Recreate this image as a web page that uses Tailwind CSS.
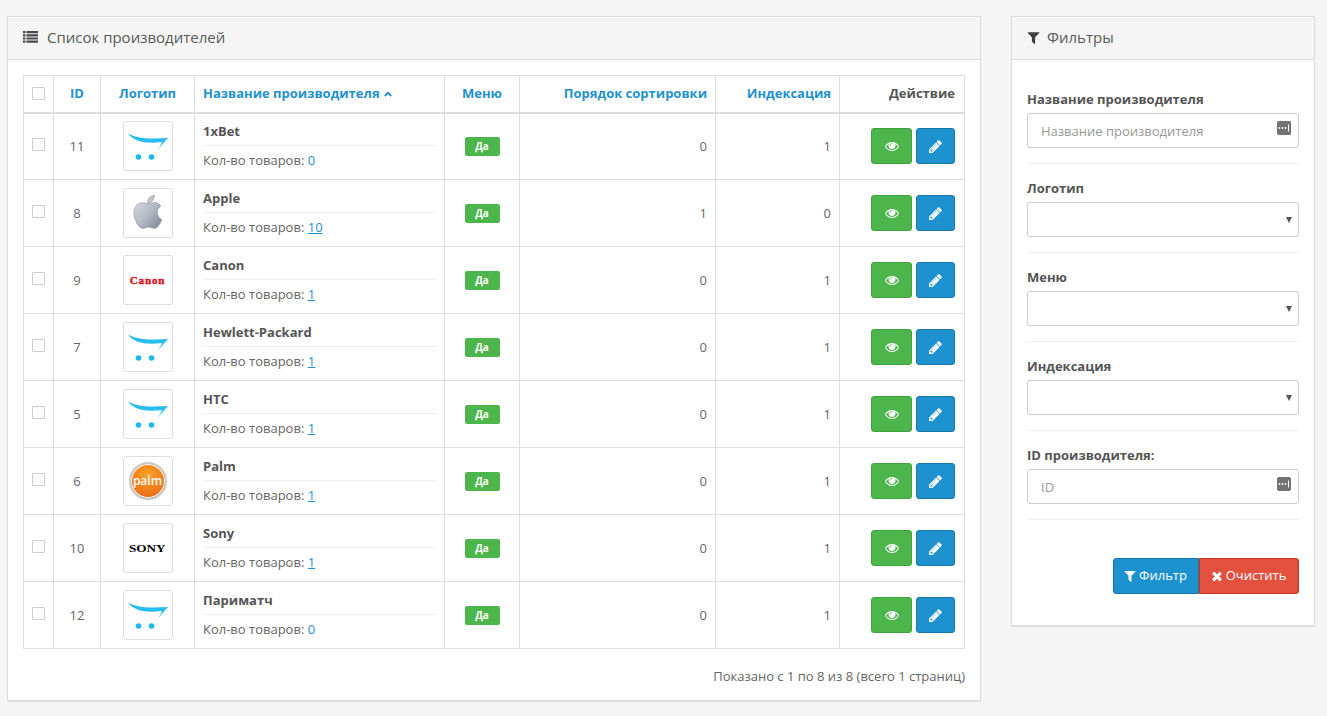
<!DOCTYPE html>
<html lang="ru">
  <head>
    <meta charset="UTF-8" />
    <meta name="viewport" content="width=device-width, initial-scale=1.0" />
    <script src="https://cdn.jsdelivr.net/npm/@tailwindcss/browser@4"></script>
    <title>Список производителей</title>
  </head>
  <body class="bg-[#f5f5f5] font-['Open_Sans',sans-serif] text-[13px] text-[#666]">
    <svg class="absolute w-0 h-0">
      <defs>
        <linearGradient id="silver" x1="0" y1="0" x2="1" y2="1">
          <stop offset="0" stop-color="#dfe2e8" />
          <stop offset="0.55" stop-color="#b3b8c4" />
          <stop offset="1" stop-color="#7b8090" />
        </linearGradient>
      </defs>
      <symbol id="cart" viewBox="0 0 48 48">
        <path fill="#27bdee" d="M4 11C9 15.500 22 17.500 44 16L32 29.500C35 26 37 23 38 20C23 22 9 20 4 11Z" />
        <circle cx="14.500" cy="35" r="2.800" fill="#1fb8ee" />
        <circle cx="27.500" cy="35" r="2.800" fill="#1fb8ee" />
      </symbol>
      <symbol id="eye" viewBox="0 0 1792 1792">
        <path fill="currentColor" d="M1664 960q-152-236-381-353 61 104 61 225 0 185-131.500 316.500t-316.500 131.500-316.500-131.500-131.500-316.500q0-121 61-225-229 117-381 353 133 205 333.500 326.500t434.500 121.500 434.500-121.500 333.500-326.500zm-720-384q0-20-14-34t-34-14q-125 0-214.500 89.500t-89.500 214.500q0 20 14 34t34 14 34-14 14-34q0-86 61-147t147-61q20 0 34-14t14-34zm848 384q0 34-20 69-140 230-376.500 368.500t-499.500 138.500-499.500-139-376.500-368q-20-35-20-69t20-69q140-229 376.500-368t499.500-139 499.500 139 376.500 368q20 35 20 69z" />
      </symbol>
      <symbol id="pencil" viewBox="0 0 1792 1792">
        <path fill="currentColor" d="M491 1536l91-91-235-235-91 91v107h128v128h107zm523-928q0-22-22-22-10 0-17 7l-542 542q-7 7-7 17 0 22 22 22 10 0 17-7l542-542q7-7 7-17zm-54-192l416 416-832 832h-416v-416zm683 96q0 53-37 90l-166 166-416-416 166-165q36-38 90-38 53 0 91 38l235 234q37 39 37 91z" />
      </symbol>
      <symbol id="filter" viewBox="0 0 1792 1792">
        <path fill="currentColor" d="M1595 295q17 41-14 70l-493 493v742q0 42-39 59-13 5-25 5-27 0-45-19l-256-256q-19-19-19-45v-486l-493-493q-31-29-14-70 17-39 59-39h1280q42 0 59 39z" />
      </symbol>
      <symbol id="times" viewBox="0 0 1792 1792">
        <path fill="currentColor" d="M1490 1322q0 40-28 68l-136 136q-28 28-68 28t-68-28l-294-294-294 294q-28 28-68 28t-68-28l-136-136q-28-28-28-68t28-68l294-294-294-294q-28-28-28-68t28-68l136-136q28-28 68-28t68 28l294 294 294-294q28-28 68-28t68 28l136 136q28 28 28 68t-28 68l-294 294 294 294q28 28 28 68z" />
      </symbol>
      <symbol id="dots" viewBox="0 0 14 14">
        <rect width="14" height="14" rx="2" fill="#737373" />
        <circle cx="2.500" cy="7" r="0.900" fill="#fff" />
        <circle cx="5.500" cy="7" r="0.900" fill="#fff" />
        <circle cx="8.500" cy="7" r="0.900" fill="#fff" />
        <rect x="11" y="3.500" width="1" height="7" fill="#fff" />
      </symbol>
    </svg>

    <div class="flex items-start gap-[30px] pl-[7px] pt-4 h-[716px] overflow-hidden">
      <!-- manufacturers list -->
      <section class="w-[974px] h-[685px] bg-white border border-[#ddd] shadow-[0_1px_1px_rgba(0,0,0,0.08)]">
        <div class="h-[43px] px-[15px] pb-[2px] flex items-center gap-[9px] bg-[#f5f5f5] border-b border-[#ddd] text-[15px] text-[#595959]">
          <svg class="w-[15px] h-[12px]" viewBox="0 0 15 12" fill="#4a4a4a">
            <path d="M0 0h2.500v2.200H0zM3.500 0H15v2.200H3.500zM0 3.200h2.500v2.200H0zM3.500 3.200H15v2.200H3.500zM0 6.400h2.500v2.200H0zM3.500 6.400H15v2.200H3.500zM0 9.600h2.500v2.200H0zM3.500 9.600H15v2.200H3.500z" />
          </svg>
          <span>Список производителей</span>
        </div>
        <div class="p-[15px]">
          <table class="table-fixed border-collapse w-[941px]">
            <colgroup>
              <col class="w-[30px]" /><col class="w-[47px]" /><col class="w-[94px]" /><col class="w-[250px]" /><col class="w-[75px]" /><col class="w-[196px]" /><col class="w-[124px]" /><col class="w-[125px]" />
            </colgroup>
            <thead>
              <tr class="h-[37px] text-[#1e91cf]">
                <th class="border border-[#ddd] border-b-2"><input type="checkbox" class="appearance-none block w-[13px] h-[13px] mx-auto -mt-px border border-[#ccc] rounded-[1px] bg-white" /></th>
                <th class="border border-[#ddd] border-b-2 font-bold">ID</th>
                <th class="border border-[#ddd] border-b-2 font-bold">Логотип</th>
                <th class="border border-[#ddd] border-b-2 font-bold text-left px-2">
                  <span class="inline-flex items-center gap-[4px]">Название производителя
                    <svg class="w-2 h-[6px]" viewBox="0 0 8 6" fill="none" stroke="#1e91cf" stroke-width="1.800"><path d="M.8 5 4 1.800 7.200 5" /></svg>
                  </span>
                </th>
                <th class="border border-[#ddd] border-b-2 font-bold">Меню</th>
                <th class="border border-[#ddd] border-b-2 font-bold text-right px-2">Порядок сортировки</th>
                <th class="border border-[#ddd] border-b-2 font-bold text-right px-2">Индексация</th>
                <th class="border border-[#ddd] border-b-2 font-bold text-right pr-[9px] text-[#555]">Действие</th>
              </tr>
            </thead>
            <tbody>
              <tr class="h-[67px]">
                <td class="border border-[#ddd]"><input type="checkbox" class="appearance-none block w-[13px] h-[13px] mx-auto -mt-[4px] border border-[#ccc] rounded-[1px] bg-white" /></td>
                <td class="border border-[#ddd] text-center">11</td>
                <td class="border border-[#ddd]"><div class="w-[50px] h-[50px] mx-auto border border-[#ddd] rounded-[3px] bg-white"><svg class="w-full h-full"><use href="#cart" /></svg></div></td>
                <td class="border border-[#ddd] px-2 align-top"><div class="h-[32px] pt-[8px] font-bold text-[#555] border-b border-[#eee]">1xBet</div><div class="pt-[5px]">Кол-во товаров: <a class="text-[#1e91cf]">0</a></div></td>
                <td class="border border-[#ddd]"><span class="flex items-center justify-center w-[35px] h-[19px] mx-auto rounded-[2px] bg-[#4cb64c] text-white text-[10px] font-bold">Да</span></td>
                <td class="border border-[#ddd] text-right px-2">0</td>
                <td class="border border-[#ddd] text-right px-2">1</td>
                <td class="border border-[#ddd] pr-[9px]"><div class="flex justify-end gap-1"><button class="flex items-center justify-center w-[41px] h-[36px] rounded-[3px] bg-[#4cb64c] border border-[#3ea53e] text-white"><svg class="w-[14px] h-[14px]"><use href="#eye" /></svg></button><button class="flex items-center justify-center w-[39px] h-[36px] rounded-[3px] bg-[#1e91cf] border border-[#1978ab] text-white"><svg class="w-[15px] h-[15px]"><use href="#pencil" /></svg></button></div></td>
              </tr>
              <tr class="h-[67px]">
                <td class="border border-[#ddd]"><input type="checkbox" class="appearance-none block w-[13px] h-[13px] mx-auto -mt-[4px] border border-[#ccc] rounded-[1px] bg-white" /></td>
                <td class="border border-[#ddd] pt-[2px] text-center">8</td>
                <td class="border border-[#ddd]"><div class="flex items-center justify-center w-[50px] h-[50px] mx-auto border border-[#ddd] rounded-[3px] bg-white"><svg class="w-[36px] h-[36px]" viewBox="0 0 1792 1792"><path fill="url(#silver)" stroke="#8b8f9c" stroke-width="30" d="M1585 1215q-39 125-123 250-129 196-257 196-49 0-140-32-86-32-151-32-61 0-142 33-81 34-132 34-152 0-301-259-147-261-147-503 0-228 113-374 113-144 284-144 72 0 177 30 104 30 138 30 45 0 143-34 102-34 173-34 119 0 213 65 52 36 104 100-79 67-114 118-65 94-65 207 0 124 69 223t158 126zm-376-1173q0 61-29 136-30 75-93 138-54 54-108 72-37 11-104 17 3-149 78-257 74-107 250-148 1 3 2.500 11t2.500 11q0 4 .5 10t.5 10z" /></svg></div></td>
                <td class="border border-[#ddd] px-2 align-top"><div class="h-[33px] pt-[9px] font-bold text-[#555] border-b border-[#eee]">Apple</div><div class="pt-[5px]">Кол-во товаров: <a class="text-[#1e91cf] underline">10</a></div></td>
                <td class="border border-[#ddd]"><span class="flex items-center justify-center w-[35px] h-[19px] mx-auto rounded-[2px] bg-[#4cb64c] text-white text-[10px] font-bold">Да</span></td>
                <td class="border border-[#ddd] pt-[2px] text-right px-2">1</td>
                <td class="border border-[#ddd] pt-[2px] text-right px-2">0</td>
                <td class="border border-[#ddd] pr-[9px]"><div class="flex justify-end gap-1"><button class="flex items-center justify-center w-[41px] h-[36px] rounded-[3px] bg-[#4cb64c] border border-[#3ea53e] text-white"><svg class="w-[14px] h-[14px]"><use href="#eye" /></svg></button><button class="flex items-center justify-center w-[39px] h-[36px] rounded-[3px] bg-[#1e91cf] border border-[#1978ab] text-white"><svg class="w-[15px] h-[15px]"><use href="#pencil" /></svg></button></div></td>
              </tr>
              <tr class="h-[67px]">
                <td class="border border-[#ddd]"><input type="checkbox" class="appearance-none block w-[13px] h-[13px] mx-auto -mt-[4px] border border-[#ccc] rounded-[1px] bg-white" /></td>
                <td class="border border-[#ddd] pt-[2px] text-center">9</td>
                <td class="border border-[#ddd]"><div class="flex items-center justify-center w-[50px] h-[50px] mx-auto border border-[#ddd] rounded-[3px] bg-white font-['Liberation_Serif',serif] font-bold text-[11px] text-[#d8141c] tracking-[0.9px] [-webkit-text-stroke:0.4px_#d8141c]">Canon</div></td>
                <td class="border border-[#ddd] px-2 align-top"><div class="h-[33px] pt-[9px] font-bold text-[#555] border-b border-[#eee]">Canon</div><div class="pt-[5px]">Кол-во товаров: <a class="text-[#1e91cf] underline">1</a></div></td>
                <td class="border border-[#ddd]"><span class="flex items-center justify-center w-[35px] h-[19px] mx-auto rounded-[2px] bg-[#4cb64c] text-white text-[10px] font-bold">Да</span></td>
                <td class="border border-[#ddd] pt-[2px] text-right px-2">0</td>
                <td class="border border-[#ddd] pt-[2px] text-right px-2">1</td>
                <td class="border border-[#ddd] pr-[9px]"><div class="flex justify-end gap-1"><button class="flex items-center justify-center w-[41px] h-[36px] rounded-[3px] bg-[#4cb64c] border border-[#3ea53e] text-white"><svg class="w-[14px] h-[14px]"><use href="#eye" /></svg></button><button class="flex items-center justify-center w-[39px] h-[36px] rounded-[3px] bg-[#1e91cf] border border-[#1978ab] text-white"><svg class="w-[15px] h-[15px]"><use href="#pencil" /></svg></button></div></td>
              </tr>
              <tr class="h-[67px]">
                <td class="border border-[#ddd]"><input type="checkbox" class="appearance-none block w-[13px] h-[13px] mx-auto -mt-[4px] border border-[#ccc] rounded-[1px] bg-white" /></td>
                <td class="border border-[#ddd] pt-[2px] text-center">7</td>
                <td class="border border-[#ddd]"><div class="w-[50px] h-[50px] mx-auto border border-[#ddd] rounded-[3px] bg-white"><svg class="w-full h-full"><use href="#cart" /></svg></div></td>
                <td class="border border-[#ddd] px-2 align-top"><div class="h-[33px] pt-[9px] font-bold text-[#555] border-b border-[#eee]">Hewlett-Packard</div><div class="pt-[5px]">Кол-во товаров: <a class="text-[#1e91cf] underline">1</a></div></td>
                <td class="border border-[#ddd]"><span class="flex items-center justify-center w-[35px] h-[19px] mx-auto rounded-[2px] bg-[#4cb64c] text-white text-[10px] font-bold">Да</span></td>
                <td class="border border-[#ddd] pt-[2px] text-right px-2">0</td>
                <td class="border border-[#ddd] pt-[2px] text-right px-2">1</td>
                <td class="border border-[#ddd] pr-[9px]"><div class="flex justify-end gap-1"><button class="flex items-center justify-center w-[41px] h-[36px] rounded-[3px] bg-[#4cb64c] border border-[#3ea53e] text-white"><svg class="w-[14px] h-[14px]"><use href="#eye" /></svg></button><button class="flex items-center justify-center w-[39px] h-[36px] rounded-[3px] bg-[#1e91cf] border border-[#1978ab] text-white"><svg class="w-[15px] h-[15px]"><use href="#pencil" /></svg></button></div></td>
              </tr>
              <tr class="h-[67px]">
                <td class="border border-[#ddd]"><input type="checkbox" class="appearance-none block w-[13px] h-[13px] mx-auto -mt-[4px] border border-[#ccc] rounded-[1px] bg-white" /></td>
                <td class="border border-[#ddd] pt-[2px] text-center">5</td>
                <td class="border border-[#ddd]"><div class="w-[50px] h-[50px] mx-auto border border-[#ddd] rounded-[3px] bg-white"><svg class="w-full h-full"><use href="#cart" /></svg></div></td>
                <td class="border border-[#ddd] px-2 align-top"><div class="h-[33px] pt-[9px] font-bold text-[#555] border-b border-[#eee]">HTC</div><div class="pt-[5px]">Кол-во товаров: <a class="text-[#1e91cf] underline">1</a></div></td>
                <td class="border border-[#ddd]"><span class="flex items-center justify-center w-[35px] h-[19px] mx-auto rounded-[2px] bg-[#4cb64c] text-white text-[10px] font-bold">Да</span></td>
                <td class="border border-[#ddd] pt-[2px] text-right px-2">0</td>
                <td class="border border-[#ddd] pt-[2px] text-right px-2">1</td>
                <td class="border border-[#ddd] pr-[9px]"><div class="flex justify-end gap-1"><button class="flex items-center justify-center w-[41px] h-[36px] rounded-[3px] bg-[#4cb64c] border border-[#3ea53e] text-white"><svg class="w-[14px] h-[14px]"><use href="#eye" /></svg></button><button class="flex items-center justify-center w-[39px] h-[36px] rounded-[3px] bg-[#1e91cf] border border-[#1978ab] text-white"><svg class="w-[15px] h-[15px]"><use href="#pencil" /></svg></button></div></td>
              </tr>
              <tr class="h-[67px]">
                <td class="border border-[#ddd]"><input type="checkbox" class="appearance-none block w-[13px] h-[13px] mx-auto -mt-[4px] border border-[#ccc] rounded-[1px] bg-white" /></td>
                <td class="border border-[#ddd] pt-[2px] text-center">6</td>
                <td class="border border-[#ddd]"><div class="flex items-center justify-center w-[50px] h-[50px] mx-auto border border-[#ddd] rounded-[3px] bg-white"><span class="flex items-center justify-center w-[38px] h-[38px] rounded-full bg-[radial-gradient(circle_at_50%_30%,#fba227,#e85f16)] border-2 border-[#c9c9c9] shadow-[inset_0_0_0_1px_#fff] text-white text-[12px] font-semibold leading-none">palm</span></div></td>
                <td class="border border-[#ddd] px-2 align-top"><div class="h-[33px] pt-[9px] font-bold text-[#555] border-b border-[#eee]">Palm</div><div class="pt-[5px]">Кол-во товаров: <a class="text-[#1e91cf] underline">1</a></div></td>
                <td class="border border-[#ddd]"><span class="flex items-center justify-center w-[35px] h-[19px] mx-auto rounded-[2px] bg-[#4cb64c] text-white text-[10px] font-bold">Да</span></td>
                <td class="border border-[#ddd] pt-[2px] text-right px-2">0</td>
                <td class="border border-[#ddd] pt-[2px] text-right px-2">1</td>
                <td class="border border-[#ddd] pr-[9px]"><div class="flex justify-end gap-1"><button class="flex items-center justify-center w-[41px] h-[36px] rounded-[3px] bg-[#4cb64c] border border-[#3ea53e] text-white"><svg class="w-[14px] h-[14px]"><use href="#eye" /></svg></button><button class="flex items-center justify-center w-[39px] h-[36px] rounded-[3px] bg-[#1e91cf] border border-[#1978ab] text-white"><svg class="w-[15px] h-[15px]"><use href="#pencil" /></svg></button></div></td>
              </tr>
              <tr class="h-[67px]">
                <td class="border border-[#ddd]"><input type="checkbox" class="appearance-none block w-[13px] h-[13px] mx-auto -mt-[4px] border border-[#ccc] rounded-[1px] bg-white" /></td>
                <td class="border border-[#ddd] pt-[2px] text-center">10</td>
                <td class="border border-[#ddd]"><div class="flex items-center justify-center w-[50px] h-[50px] mx-auto border border-[#ddd] rounded-[3px] bg-white font-['Liberation_Serif',serif] font-bold text-[11px] text-black"><span class="scale-x-[1.2]">SONY</span></div></td>
                <td class="border border-[#ddd] px-2 align-top"><div class="h-[33px] pt-[9px] font-bold text-[#555] border-b border-[#eee]">Sony</div><div class="pt-[5px]">Кол-во товаров: <a class="text-[#1e91cf] underline">1</a></div></td>
                <td class="border border-[#ddd]"><span class="flex items-center justify-center w-[35px] h-[19px] mx-auto rounded-[2px] bg-[#4cb64c] text-white text-[10px] font-bold">Да</span></td>
                <td class="border border-[#ddd] pt-[2px] text-right px-2">0</td>
                <td class="border border-[#ddd] pt-[2px] text-right px-2">1</td>
                <td class="border border-[#ddd] pr-[9px]"><div class="flex justify-end gap-1"><button class="flex items-center justify-center w-[41px] h-[36px] rounded-[3px] bg-[#4cb64c] border border-[#3ea53e] text-white"><svg class="w-[14px] h-[14px]"><use href="#eye" /></svg></button><button class="flex items-center justify-center w-[39px] h-[36px] rounded-[3px] bg-[#1e91cf] border border-[#1978ab] text-white"><svg class="w-[15px] h-[15px]"><use href="#pencil" /></svg></button></div></td>
              </tr>
              <tr class="h-[67px]">
                <td class="border border-[#ddd]"><input type="checkbox" class="appearance-none block w-[13px] h-[13px] mx-auto -mt-[4px] border border-[#ccc] rounded-[1px] bg-white" /></td>
                <td class="border border-[#ddd] pt-[2px] text-center">12</td>
                <td class="border border-[#ddd]"><div class="w-[50px] h-[50px] mx-auto border border-[#ddd] rounded-[3px] bg-white"><svg class="w-full h-full"><use href="#cart" /></svg></div></td>
                <td class="border border-[#ddd] px-2 align-top"><div class="h-[33px] pt-[9px] font-bold text-[#555] border-b border-[#eee]">Париматч</div><div class="pt-[5px]">Кол-во товаров: <a class="text-[#1e91cf]">0</a></div></td>
                <td class="border border-[#ddd]"><span class="flex items-center justify-center w-[35px] h-[19px] mx-auto rounded-[2px] bg-[#4cb64c] text-white text-[10px] font-bold">Да</span></td>
                <td class="border border-[#ddd] pt-[2px] text-right px-2">0</td>
                <td class="border border-[#ddd] pt-[2px] text-right px-2">1</td>
                <td class="border border-[#ddd] pr-[9px]"><div class="flex justify-end gap-1"><button class="flex items-center justify-center w-[41px] h-[36px] rounded-[3px] bg-[#4cb64c] border border-[#3ea53e] text-white"><svg class="w-[14px] h-[14px]"><use href="#eye" /></svg></button><button class="flex items-center justify-center w-[39px] h-[36px] rounded-[3px] bg-[#1e91cf] border border-[#1978ab] text-white"><svg class="w-[15px] h-[15px]"><use href="#pencil" /></svg></button></div></td>
              </tr>
            </tbody>
          </table>
          <p class="mt-[18px] text-right">Показано с 1 по 8 из 8 (всего 1 страниц)</p>
        </div>
      </section>

      <!-- filter panel -->
      <aside class="w-[304px] h-[610px] bg-white border border-[#ddd] shadow-[0_1px_1px_rgba(0,0,0,0.08)]">
        <div class="h-[43px] pl-[14px] pr-[15px] pb-[2px] flex items-center gap-[6px] bg-[#f5f5f5] border-b border-[#ddd] text-[15px] text-[#595959]">
          <svg class="w-[15px] h-[15px] text-[#3f3f3f]"><use href="#filter" /></svg>
          <span>Фильтры</span>
        </div>
        <form class="px-[15px] pt-[15px]">
          <div class="pt-[15px] pb-[15px] border-b border-[#eee]">
            <label class="block h-[18px] mb-[5px] leading-[18px] font-bold text-[#555]">Название производителя</label>
            <div class="relative">
              <input type="text" placeholder="Название производителя" class="w-full h-[35px] px-[13px] bg-white border border-[#ccc] rounded-[3px] text-[13px] placeholder:text-[#999]" />
              <svg class="absolute right-2 top-2 w-[14px] h-[14px]"><use href="#dots" /></svg>
            </div>
          </div>
          <div class="pt-[15px] pb-[15px] border-b border-[#eee]">
            <label class="block h-[18px] mb-[5px] leading-[18px] font-bold text-[#555]">Логотип</label>
            <div class="relative">
              <select class="appearance-none block w-full h-[35px] px-[13px] bg-white border border-[#ccc] rounded-[3px]"></select>
              <svg class="absolute right-[7px] top-[15px] w-[6px] h-[6px]" viewBox="0 0 6 6" fill="#555"><path d="M0 0h6L3 6z" /></svg>
            </div>
          </div>
          <div class="pt-[15px] pb-[15px] border-b border-[#eee]">
            <label class="block h-[18px] mb-[5px] leading-[18px] font-bold text-[#555]">Меню</label>
            <div class="relative">
              <select class="appearance-none block w-full h-[35px] px-[13px] bg-white border border-[#ccc] rounded-[3px]"></select>
              <svg class="absolute right-[7px] top-[15px] w-[6px] h-[6px]" viewBox="0 0 6 6" fill="#555"><path d="M0 0h6L3 6z" /></svg>
            </div>
          </div>
          <div class="pt-[15px] pb-[15px] border-b border-[#eee]">
            <label class="block h-[18px] mb-[5px] leading-[18px] font-bold text-[#555]">Индексация</label>
            <div class="relative">
              <select class="appearance-none block w-full h-[35px] px-[13px] bg-white border border-[#ccc] rounded-[3px]"></select>
              <svg class="absolute right-[7px] top-[15px] w-[6px] h-[6px]" viewBox="0 0 6 6" fill="#555"><path d="M0 0h6L3 6z" /></svg>
            </div>
          </div>
          <div class="pt-[15px] pb-[15px] border-b border-[#eee]">
            <label class="block h-[18px] mb-[5px] leading-[18px] font-bold text-[#555]">ID производителя:</label>
            <div class="relative">
              <input type="text" placeholder="ID" class="w-full h-[35px] px-[13px] bg-white border border-[#ccc] rounded-[3px] text-[13px] placeholder:text-[#999]" />
              <svg class="absolute right-2 top-2 w-[14px] h-[14px]"><use href="#dots" /></svg>
            </div>
          </div>
          <div class="flex justify-end mt-[38px]">
            <button type="button" class="flex items-center justify-center gap-[2px] w-[86px] h-[36px] pr-[2px] bg-[#1e91cf] border border-[#1978ab] rounded-l-[3px] text-white"><svg class="w-[14px] h-[14px]"><use href="#filter" /></svg>Фильтр</button>
            <button type="button" class="flex items-center justify-center gap-[2px] w-[100px] h-[36px] pr-[2px] bg-[#e3503e] border border-[#c23321] rounded-r-[3px] text-white"><svg class="w-[14px] h-[14px]"><use href="#times" /></svg>Очистить</button>
          </div>
        </form>
      </aside>
    </div>
  </body>
</html>
